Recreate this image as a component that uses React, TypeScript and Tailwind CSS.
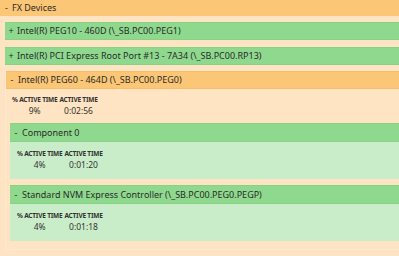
const font = { fontFamily: '"Noto Sans", "Open Sans", Arial, sans-serif' };

type Stat = { pct: string; time: string };

function Stats({ stat }: { stat: Stat }) {
  const cols = [
    { head: "% ACTIVE TIME", value: stat.pct },
    { head: "ACTIVE TIME", value: stat.time },
  ];
  return (
    <div className="flex gap-[2px] text-[#333]">
      {cols.map((c) => (
        <div key={c.head} className="flex flex-col items-center">
          <span className="text-[6.5px] font-bold leading-[8px] tracking-[-0.2px] whitespace-nowrap">
            {c.head}
          </span>
          <span className="pt-[1px] text-[8.5px] leading-[12px]">{c.value}</span>
        </div>
      ))}
    </div>
  );
}

function Bar({
  sign,
  label,
  tone,
  tall,
}: {
  sign: string;
  label: string;
  tone: "green" | "orange";
  tall?: boolean;
}) {
  const bg =
    tone === "green"
      ? "bg-[#8fd98e] border-[#86d385]"
      : "bg-[#fbc676] border-[#f7bf6c]";
  return (
    <div
      className={`flex items-center border-y pl-[2px] text-[9px] text-[#2b2b2b] ${tall ? "h-[19px]" : "h-[18px]"} ${bg}`}
    >
      <span className="w-[8px] text-center">{sign}</span>
      <span className="pl-[2px]">{label}</span>
    </div>
  );
}

function ComponentPanel({ label, stat }: { label: string; stat: Stat }) {
  return (
    <div>
      <Bar sign="-" label={label} tone="green" tall />
      <div className="h-[37px] bg-[#c9edc8] pl-[7px] pt-[8px]">
        <Stats stat={stat} />
      </div>
    </div>
  );
}

export default function App() {
  return (
    <div className="h-[256px] w-[399px] overflow-hidden bg-[#fee4c2]" style={font}>
      <div className="w-[430px]">
        <div className="flex h-[16px] items-center bg-[#fbc676] pl-[3px] text-[9px] text-[#2b2b2b]">
          <span className="w-[7px] text-center">-</span>
          <span className="pl-[2px]">FX Devices</span>
        </div>
        <div className="flex flex-col pl-[5px] pt-[6px]">
          <Bar sign="+" label="Intel(R) PEG10 - 460D (\_SB.PC00.PEG1)" tone="green" />
          <div className="h-[7px]" />
          <Bar sign="+" label="Intel(R) PCI Express Root Port #13 - 7A34 (\_SB.PC00.RP13)" tone="green" />
          <div className="h-[6px]" />
          <div className="border-b border-l border-[#fde9cf]">
            <Bar sign="-" label="Intel(R) PEG60 - 464D (\_SB.PC00.PEG0)" tone="orange" />
            <div className="flex flex-col pb-[8px] pl-[4px] pt-[7px]">
              <div className="pl-[2px]">
                <Stats stat={{ pct: "9%", time: "0:02:56" }} />
              </div>
              <div className="h-[6px]" />
              <ComponentPanel label="Component 0" stat={{ pct: "4%", time: "0:01:20" }} />
              <div className="h-[6px]" />
              <ComponentPanel
                label="Standard NVM Express Controller (\_SB.PC00.PEG0.PEGP)"
                stat={{ pct: "4%", time: "0:01:18" }}
              />
            </div>
          </div>
        </div>
      </div>
    </div>
  );
}
